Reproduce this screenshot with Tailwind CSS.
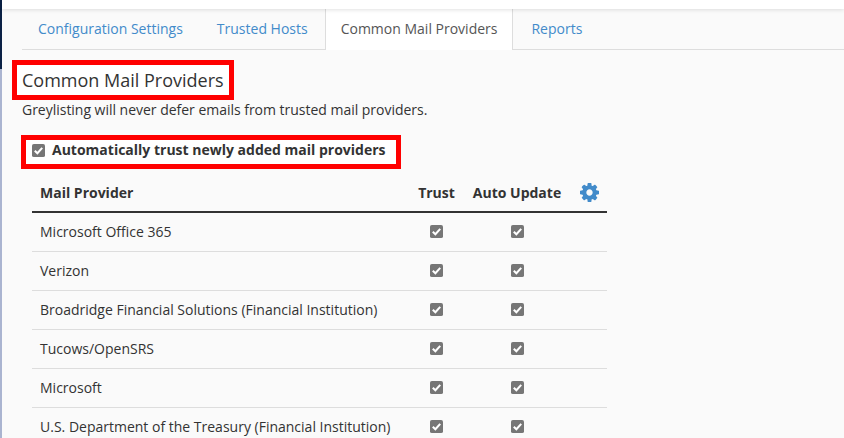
<!DOCTYPE html>
<html lang="en">

<head>
  <meta charset="UTF-8">
  <title>Greylisting</title>
  <script src="https://cdn.jsdelivr.net/npm/@tailwindcss/browser@4"></script>
</head>

<body class="h-[438px] w-[844px] overflow-hidden bg-[#fafafa] font-['Open_Sans',sans-serif] text-[14px] text-[#333]">
  <div class="flex h-[438px]">

    <!-- Sidebar edge -->
    <div class="flex w-[2px] shrink-0 flex-col">
      <div class="h-[69px] bg-[#0b2145]"></div>
      <div class="flex-1 bg-[#aab4d0]"></div>
    </div>

    <div class="min-w-0 flex-1">
      <!-- Top bar -->
      <div class="relative z-10 h-[9px] bg-white shadow-[0_1px_4px_rgba(0,0,0,0.12)]"></div>

      <!-- Tabs -->
      <div class="ml-[20px] flex h-[41px] border-b border-[#ddd]">
        <a class="mr-[2px] px-[16px] leading-[40px] text-[#428bca]">Configuration Settings</a>
        <a class="mr-[1px] px-[16px] leading-[40px] text-[#428bca]">Trusted Hosts</a>
        <a class="mr-[2px] h-[41px] border-x border-[#ddd] bg-white px-[15px] leading-[40px] text-[#555]">Common Mail Providers</a>
        <a class="px-[16px] leading-[40px] text-[#428bca]">Reports</a>
      </div>

      <!-- Heading -->
      <h1 class="mt-[10px] ml-[10px] h-[40px] w-[222px] border-[5px] border-[#f00] bg-white pl-[5px] text-[18px] leading-[30px] font-normal">Common Mail Providers</h1>
      <p class="ml-[20px] leading-[20px] tracking-[-0.02px]">Greylisting will never defer emails from trusted mail providers.</p>

      <!-- Auto trust -->
      <label class="mt-[15px] ml-[19px] flex h-[34px] w-[380px] items-start border-[5px] border-[#f00] bg-white pl-[6px] leading-[20px] font-bold">
        <svg class="mt-[4px] mr-[7px] h-[13px] w-[13px]" viewBox="0 0 14 14"><rect width="14" height="14" rx="2" fill="#767676"/><path d="M3 7.2l2.8 2.8L11 4.2" fill="none" stroke="#fff" stroke-width="2.2"/></svg>
        Automatically trust newly added mail providers
      </label>

      <!-- Providers table -->
      <table class="mt-[6px] ml-[30px] w-[575px] table-fixed border-collapse">
        <thead>
          <tr class="h-[37px] border-b-2 border-[#333]">
            <th class="px-[8px] pb-[1px] text-left font-bold">Mail Provider</th>
            <th class="w-[72px] pb-[1px] pl-[1px] text-center font-bold">Trust</th>
            <th class="w-[90px] pb-[1px] text-center font-bold">Auto Update</th>
            <th class="w-[45px] pb-[1px] text-left">
              <svg class="ml-[18px] h-[19px] w-[19px]" viewBox="0 0 1536 1536" fill="#428bca"><path d="M1024 768q0-106-75-181t-181-75-181 75-75 181 75 181 181 75 181-75 75-181zm512-109v222q0 12-8 23t-20 13l-185 28q-19 54-39 91 35 50 107 138 10 12 10 25t-9 23q-27 37-99 108t-94 71q-12 0-26-9l-138-108q-44 23-91 38-16 136-29 186-7 28-36 28h-222q-14 0-24.500-8.500t-11.500-21.500l-28-184q-49-16-90-37l-141 107q-10 9-25 9-14 0-25-11-126-114-165-168-7-10-7-23 0-12 8-23 15-21 51-66.500t54-70.500q-27-50-41-99l-183-27q-13-2-21-12.500t-8-23.500v-222q0-12 8-23t19-13l186-28q14-46 39-92-40-57-107-138-10-12-10-24 0-10 9-23 26-36 98.500-107.500t94.500-71.500q13 0 26 10l138 107q44-23 91-38 16-136 29-186 7-28 36-28h222q14 0 24.500 8.500t11.500 21.500l28 184q49 16 90 37l142-107q9-9 24-9 13 0 25 10 129 119 165 170 7 8 7 22 0 12-8 23-15 21-51 66.500t-54 70.500q26 50 41 98l183 28q13 2 21 12.500t8 23.500z"/></svg>
            </th>
          </tr>
        </thead>
        <tbody>
          <tr class="h-[39px] border-b border-[#ddd]">
            <td class="px-[8px]">Microsoft Office 365</td>
            <td><svg class="mx-auto h-[13px] w-[13px]" viewBox="0 0 14 14"><rect width="14" height="14" rx="2" fill="#767676"/><path d="M3 7.2l2.800 2.800L11 4.200" fill="none" stroke="#fff" stroke-width="2.200"/></svg></td>
            <td><svg class="mx-auto h-[13px] w-[13px]" viewBox="0 0 14 14"><rect width="14" height="14" rx="2" fill="#767676"/><path d="M3 7.2l2.800 2.800L11 4.200" fill="none" stroke="#fff" stroke-width="2.200"/></svg></td>
            <td></td>
          </tr>
          <tr class="h-[39px] border-b border-[#ddd]">
            <td class="px-[8px]">Verizon</td>
            <td><svg class="mx-auto h-[13px] w-[13px]" viewBox="0 0 14 14"><rect width="14" height="14" rx="2" fill="#767676"/><path d="M3 7.2l2.800 2.800L11 4.200" fill="none" stroke="#fff" stroke-width="2.200"/></svg></td>
            <td><svg class="mx-auto h-[13px] w-[13px]" viewBox="0 0 14 14"><rect width="14" height="14" rx="2" fill="#767676"/><path d="M3 7.2l2.800 2.800L11 4.200" fill="none" stroke="#fff" stroke-width="2.200"/></svg></td>
            <td></td>
          </tr>
          <tr class="h-[39px] border-b border-[#ddd]">
            <td class="px-[8px]">Broadridge Financial Solutions (Financial Institution)</td>
            <td><svg class="mx-auto h-[13px] w-[13px]" viewBox="0 0 14 14"><rect width="14" height="14" rx="2" fill="#767676"/><path d="M3 7.2l2.800 2.800L11 4.200" fill="none" stroke="#fff" stroke-width="2.200"/></svg></td>
            <td><svg class="mx-auto h-[13px] w-[13px]" viewBox="0 0 14 14"><rect width="14" height="14" rx="2" fill="#767676"/><path d="M3 7.2l2.800 2.800L11 4.200" fill="none" stroke="#fff" stroke-width="2.200"/></svg></td>
            <td></td>
          </tr>
          <tr class="h-[39px] border-b border-[#ddd]">
            <td class="px-[8px]">Tucows/OpenSRS</td>
            <td><svg class="mx-auto h-[13px] w-[13px]" viewBox="0 0 14 14"><rect width="14" height="14" rx="2" fill="#767676"/><path d="M3 7.2l2.800 2.800L11 4.200" fill="none" stroke="#fff" stroke-width="2.200"/></svg></td>
            <td><svg class="mx-auto h-[13px] w-[13px]" viewBox="0 0 14 14"><rect width="14" height="14" rx="2" fill="#767676"/><path d="M3 7.2l2.800 2.800L11 4.200" fill="none" stroke="#fff" stroke-width="2.200"/></svg></td>
            <td></td>
          </tr>
          <tr class="h-[39px] border-b border-[#ddd]">
            <td class="px-[8px]">Microsoft</td>
            <td><svg class="mx-auto h-[13px] w-[13px]" viewBox="0 0 14 14"><rect width="14" height="14" rx="2" fill="#767676"/><path d="M3 7.2l2.800 2.800L11 4.200" fill="none" stroke="#fff" stroke-width="2.200"/></svg></td>
            <td><svg class="mx-auto h-[13px] w-[13px]" viewBox="0 0 14 14"><rect width="14" height="14" rx="2" fill="#767676"/><path d="M3 7.2l2.800 2.800L11 4.200" fill="none" stroke="#fff" stroke-width="2.200"/></svg></td>
            <td></td>
          </tr>
          <tr class="h-[39px] border-b border-[#ddd]">
            <td class="px-[8px]">U.S. Department of the Treasury (Financial Institution)</td>
            <td><svg class="mx-auto h-[13px] w-[13px]" viewBox="0 0 14 14"><rect width="14" height="14" rx="2" fill="#767676"/><path d="M3 7.2l2.800 2.800L11 4.200" fill="none" stroke="#fff" stroke-width="2.200"/></svg></td>
            <td><svg class="mx-auto h-[13px] w-[13px]" viewBox="0 0 14 14"><rect width="14" height="14" rx="2" fill="#767676"/><path d="M3 7.2l2.800 2.800L11 4.200" fill="none" stroke="#fff" stroke-width="2.200"/></svg></td>
            <td></td>
          </tr>
        </tbody>
      </table>
    </div>
  </div>
</body>

</html>
